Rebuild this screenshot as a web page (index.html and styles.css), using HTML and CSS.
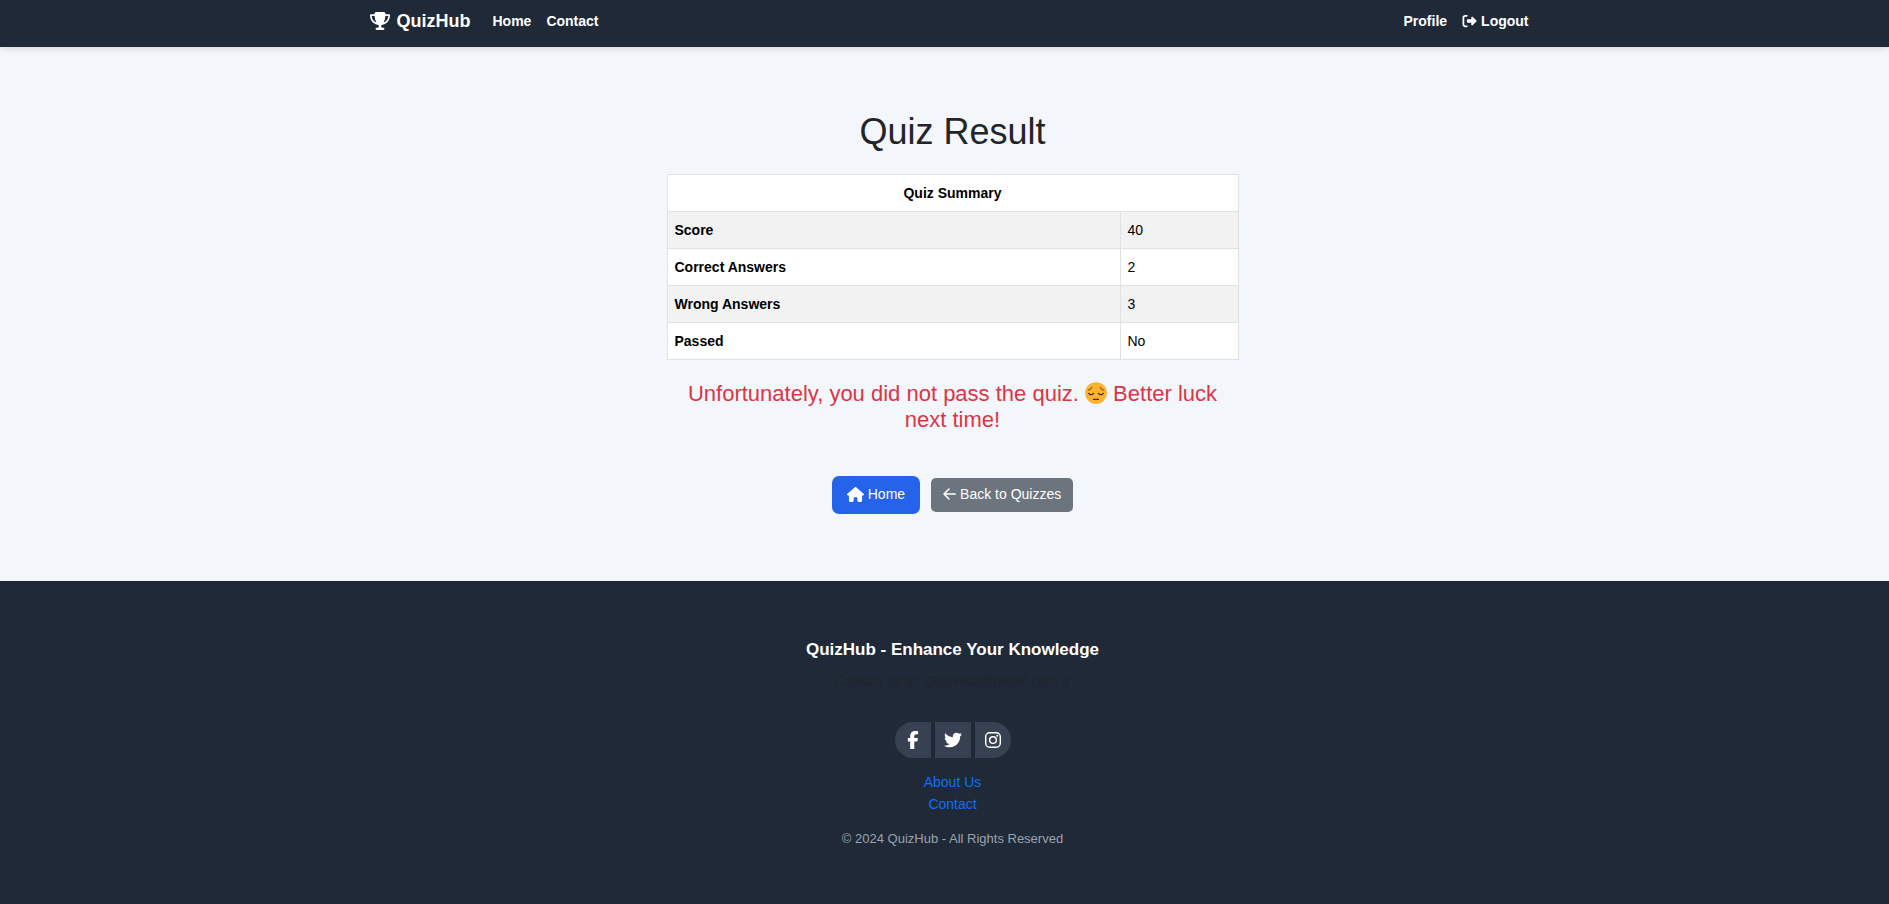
FILE: index.html
```html
<!DOCTYPE html>
<html lang="en">
<head>
<meta charset="utf-8">
<title>Quiz Result - QuizHub</title>
<link rel="stylesheet" href="styles.css">
</head>
<body>
<header class="site-header">
  <nav class="navbar">
    <a class="brand" href="#">
      <svg class="icon-trophy" viewBox="0 0 576 512" aria-hidden="true"><path d="M400 0H176c-26.500 0-48.100 21.800-47.100 48.200c.2 5.300 .4 10.600 .7 15.800H24C10.700 64 0 74.700 0 88c0 92.600 33.500 157 78.500 200.700c44.300 43.100 98.300 64.800 138.100 75.800c23.400 6.500 39.400 26 39.400 45.600c0 20.900-17 37.900-37.900 37.900H192c-17.700 0-32 14.300-32 32s14.300 32 32 32H384c17.700 0 32-14.300 32-32s-14.300-32-32-32H357.900C337 448 320 431 320 410.100c0-19.600 15.900-39.200 39.400-45.600c39.900-11 93.900-32.700 138.200-75.800C542.500 245 576 180.600 576 88c0-13.300-10.700-24-24-24H446.400c.3-5.200 .5-10.400 .7-15.800C448.100 21.800 426.500 0 400 0zM48.900 112h84.400c9.100 90.100 29.200 150.300 51.900 190.600c-24.900-11-50.800-26.500-73.200-48.300c-32-31.100-58-76-63-142.300zM464.100 254.300c-22.400 21.800-48.300 37.300-73.200 48.300c22.700-40.300 42.800-100.500 51.900-190.600h84.400c-5.100 66.300-31.100 111.200-63 142.300z"/></svg>
      <span>QuizHub</span>
    </a>
    <a class="nav-link" href="#">Home</a>
    <a class="nav-link" href="#">Contact</a>
    <a class="nav-link nav-end" href="#">Profile</a>
    <a class="nav-link" href="#">
      <svg class="icon" viewBox="0 0 512 512" aria-hidden="true"><path d="M377.900 105.900L500.700 228.700c7.200 7.200 11.300 17.100 11.300 27.300s-4.100 20.100-11.300 27.300L377.900 406.100c-6.400 6.400-15 9.900-24 9.900c-18.700 0-33.900-15.200-33.900-33.900l0-62.100-128 0c-17.700 0-32-14.300-32-32l0-64c0-17.700 14.300-32 32-32l128 0 0-62.100c0-18.700 15.200-33.900 33.900-33.900c9 0 17.600 3.600 24 9.900zM160 96L96 96c-17.700 0-32 14.300-32 32l0 256c0 17.700 14.300 32 32 32l64 0c17.700 0 32 14.300 32 32s-14.300 32-32 32l-64 0c-53 0-96-43-96-96L0 128C0 75 43 32 96 32l64 0c17.700 0 32 14.300 32 32s-14.300 32-32 32z"/></svg>
      <span>Logout</span>
    </a>
  </nav>
</header>

<main class="result">
  <h1 class="title">Quiz Result</h1>
  <table class="summary">
    <thead>
      <tr><th class="summary-head" colspan="2" scope="colgroup">Quiz Summary</th></tr>
    </thead>
    <tbody>
      <tr><th scope="row">Score</th><td>40</td></tr>
      <tr><th scope="row">Correct Answers</th><td>2</td></tr>
      <tr><th scope="row">Wrong Answers</th><td>3</td></tr>
      <tr><th scope="row">Passed</th><td>No</td></tr>
    </tbody>
  </table>
  <p class="message">Unfortunately, you did not pass the quiz.
    <svg class="emoji" viewBox="0 0 24 24" role="img" aria-label="Pensive face"><circle cx="12" cy="12" r="11.800" fill="#ffb02e"/><g fill="none" stroke="#402a32" stroke-width="1.300" stroke-linecap="round"><path d="M3.800 8.600Q6.600 8.200 7.400 5.900M20.200 8.600Q17.400 8.200 16.600 5.900" stroke="#8a5a20"/><path d="M3.900 12.400Q6.600 15.300 9.500 12.400M14.500 12.400Q17.400 15.300 20.100 12.400M9.200 19H14.800"/></g></svg>
    Better luck next time!</p>
  <div class="actions">
    <a class="btn btn-primary" href="#">
      <svg class="icon-home" viewBox="0 0 576 512" aria-hidden="true"><path d="M575.800 255.500c0 18-15 32.100-32 32.100h-32l.7 160.200c0 2.700-.2 5.400-.5 8.100V472c0 22.100-17.900 40-40 40H392c-22.100 0-40-17.900-40-40V384c0-17.700-14.300-32-32-32H256c-17.700 0-32 14.300-32 32v88c0 22.100-17.900 40-40 40H104c-22.100 0-40-17.900-40-40V287.600H32c-18 0-32-14-32-32.100c0-9 3-17 10-24L266.400 8c7-7 15-8 22-8s15 2 21 7L564.800 231.500c8 7 12 15 11 24z"/></svg>
      <span>Home</span>
    </a>
    <a class="btn btn-secondary" href="#">
      <svg class="icon-arrow" viewBox="0 0 13 14" aria-hidden="true"><path d="M6 2L1 7l5 5M1 7h11.200" fill="none" stroke="currentColor" stroke-width="1.500" stroke-linecap="round" stroke-linejoin="round"/></svg>
      <span>Back to Quizzes</span>
    </a>
  </div>
</main>

<footer class="site-footer">
  <h2 class="footer-title">QuizHub - Enhance Your Knowledge</h2>
  <p class="footer-contact">Contact us at: QuizHub@gmail.com.tr</p>
  <div class="social">
    <a class="social-link" href="#" aria-label="Facebook"><svg class="icon-facebook" viewBox="0 0 320 512" aria-hidden="true"><path d="M80 299.300V512H196V299.300h86.500l18-97.800H196V166.900c0-51.700 20.300-71.500 72.700-71.500c16.300 0 29.400 .4 37 1.200V7.900C291.400 4 256.400 0 236.200 0C129.300 0 80 50.500 80 159.400v42.100H14v97.800H80z"/></svg></a>
    <a class="social-link" href="#" aria-label="Twitter"><svg class="icon-social" viewBox="0 0 512 512" aria-hidden="true"><path d="M459.370 151.716c.325 4.548.325 9.097.325 13.645 0 138.720-105.583 298.558-298.558 298.558-59.452 0-114.680-17.219-161.137-47.106 8.447.974 16.568 1.299 25.340 1.299 49.055 0 94.213-16.568 130.274-44.832-46.132-.975-84.792-31.188-98.112-72.772 6.498.974 12.995 1.624 19.818 1.624 9.421 0 18.843-1.300 27.614-3.573-48.081-9.747-84.143-51.980-84.143-102.985v-1.299c13.969 7.797 30.214 12.670 47.431 13.319-28.264-18.843-46.781-51.005-46.781-87.391 0-19.492 5.197-37.360 14.294-52.954 51.655 63.675 129.300 105.258 216.365 109.807-1.624-7.797-2.599-15.918-2.599-24.040 0-57.828 46.782-104.934 104.934-104.934 30.213 0 57.502 12.670 76.670 33.137 23.715-4.548 46.456-13.320 66.599-25.340-7.798 24.366-24.366 44.833-46.132 57.827 21.117-2.273 41.584-8.122 60.426-16.243-14.292 20.791-32.161 39.308-52.628 54.253z"/></svg></a>
    <a class="social-link" href="#" aria-label="Instagram"><svg class="icon-instagram" viewBox="0 0 448 448" aria-hidden="true"><rect x="20" y="20" width="408" height="408" rx="112" fill="none" stroke="currentColor" stroke-width="40"/><circle cx="224" cy="224" r="94" fill="none" stroke="currentColor" stroke-width="41"/><circle cx="344" cy="104" r="27"/></svg></a>
  </div>
  <ul class="footer-links">
    <li><a href="#">About Us</a></li>
    <li><a href="#">Contact</a></li>
  </ul>
  <p class="copyright">© 2024 QuizHub - All Rights Reserved</p>
</footer>
</body>
</html>
```
FILE: styles.css
```css
* {
  box-sizing: border-box;
}

body {
  display: flex;
  flex-direction: column;
  min-height: 100vh;
  margin: 0;
  background: #f3f6fb;
  color: #212529;
  font: 14px/22px "Liberation Sans", Arial, sans-serif;
}

h1,
h2,
p,
ul {
  margin: 0;
  padding: 0;
}

a {
  text-decoration: none;
}

svg {
  flex: none;
  fill: currentColor;
}

.site-header {
  padding-left: 16px;
  background: #1f2937;
  box-shadow: 0 2px 6px rgba(0, 0, 0, 0.12);
}

.navbar {
  display: flex;
  align-items: center;
  gap: 15px;
  max-width: 1200px;
  margin: 0 auto;
  padding: 8px 24px 13px 17px;
}

.brand,
.nav-link {
  display: flex;
  align-items: center;
  color: #fff;
  font-weight: 700;
}

.brand {
  gap: 7px;
  margin-right: 7px;
  font-size: 18px;
  line-height: 26px;
}

.nav-link {
  gap: 4px;
}

.nav-end {
  margin-left: auto;
}

.icon-trophy {
  width: 20px;
  height: 18px;
}

.icon {
  width: 15px;
  height: 14px;
}

.result {
  margin-left: 16px;
  padding: 65px 16px 67px;
  text-align: center;
}

.title {
  margin-bottom: 22px;
  font-size: 36px;
  font-weight: 400;
  line-height: 40px;
}

.summary {
  width: 100%;
  max-width: 572px;
  margin: 0 auto 21px;
  border-collapse: collapse;
  background: #fff;
  color: #000;
  text-align: left;
}

.summary th,
.summary td {
  height: 37px;
  padding: 7px;
  border: 1px solid #dee2e6;
}

.summary td {
  width: 118px;
}

.summary .summary-head {
  text-align: center;
}

.summary tbody tr:nth-child(odd) {
  background: #f2f2f2;
}

.message {
  max-width: 572px;
  margin: 0 auto;
  color: #dc3545;
  font-size: 22px;
  line-height: 26px;
}

.emoji {
  width: 22px;
  height: 22px;
  vertical-align: -3px;
}

.actions {
  display: flex;
  justify-content: center;
  align-items: center;
  gap: 11px;
  margin-top: 43px;
}

.btn {
  display: flex;
  align-items: center;
  gap: 4px;
  color: #fff;
}

.btn-primary {
  padding: 7px 15px 9px;
  border-radius: 7px;
  background: #2563eb;
}

.btn-secondary {
  padding: 5px 12px 7px;
  border-radius: 5px;
  background: #6c757d;
}

.icon-home {
  width: 17px;
  height: 15px;
}

.icon-arrow {
  width: 13px;
  height: 14px;
}

.site-footer {
  flex: 1;
  padding: 58px 0 48px 16px;
  background: #1f2937;
  text-align: center;
}

.footer-title {
  margin-bottom: 9px;
  color: #fff;
  font-size: 17px;
  line-height: 22px;
}

.footer-contact {
  margin-bottom: 30px;
}

.social {
  display: flex;
  justify-content: center;
  gap: 4px;
  margin-bottom: 13px;
}

.social-link {
  display: flex;
  align-items: center;
  justify-content: center;
  width: 36px;
  height: 36px;
  background: #374151;
  color: #fff;
}

.social-link:first-child {
  border-radius: 18px 0 0 18px;
}

.social-link:last-child {
  border-radius: 0 18px 18px 0;
}

.icon-facebook {
  width: 12px;
  height: 18px;
}

.icon-social {
  width: 20px;
  height: 18px;
}

.icon-instagram {
  width: 16px;
  height: 16px;
}

.footer-links {
  margin-bottom: 13px;
  list-style: none;
}

.footer-links a {
  color: #0d6efd;
}

.copyright {
  color: #9ca3af;
  font-size: 13px;
}
```
